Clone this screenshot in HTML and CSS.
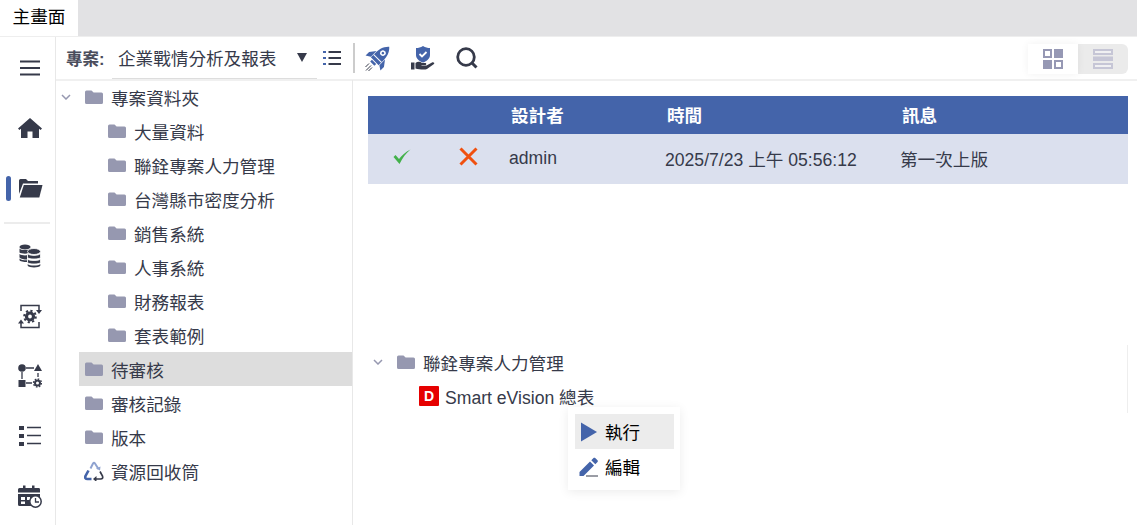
FILE: index.html
```html
<!DOCTYPE html>
<html lang="zh-Hant">
<head>
<meta charset="utf-8">
<title>主畫面</title>
<link rel="stylesheet" href="styles.css">
</head>
<body>
<svg class="defs" width="0" height="0" aria-hidden="true">
  <symbol id="folder" viewBox="0 0 18 15"><path d="M1.500 0.500H6.500L8.600 2.600H16.500A1.500 1.500 0 0 1 18 4.100V12.500A1.500 1.500 0 0 1 16.500 14H1.500A1.500 1.500 0 0 1 0 12.500V2A1.500 1.500 0 0 1 1.500 0.500Z" fill="#9698b0"/></symbol>
  <symbol id="chev" viewBox="0 0 10 6"><path d="M1 1L5 5L9 1" fill="none" stroke="#9698b0" stroke-width="1.500"/></symbol>
</svg>
<nav class="tabs"><div class="tab">主畫面</div></nav>
<div class="app">
  <aside class="rail">
    <div class="rail-btn"><svg width="20" height="16" viewBox="0 0 20 16"><path d="M0 1.500H20M0 8H20M0 14.500H20" stroke="#363a4a" stroke-width="2.200"/></svg></div>
    <div class="rail-btn"><svg width="24" height="20" viewBox="0 0 24 20"><path d="M12 0L24 10.500L22.600 12L21 10.700V20H14.500V13.500H9.500V20H3V10.700L1.400 12L0 10.500Z" fill="#363a4a"/></svg></div>
    <div class="rail-btn active"><span class="pill"></span><svg width="25" height="20" viewBox="0 0 25 20"><path d="M1 2.500A1.500 1.500 0 0 1 2.500 1H8L10 3H20V5.500H5L1 16Z" fill="#363a4a"/><path d="M5.800 7H24.500L21.300 19.500H1.800Z" fill="#363a4a"/></svg></div>
    <div class="rail-sep"></div>
    <div class="rail-btn"><svg width="22" height="24" viewBox="0 0 22 24"><g fill="#363a4a"><ellipse cx="6" cy="3" rx="5.500" ry="2.500"/><path d="M0.500 4.500C2 6.500 10 6.500 11.500 4.500V8.500C10 10 2 10 0.500 8.500Z"/><path d="M0.500 10C2 11.500 6 11.500 8 11.300V15.500C5 15.500 2 15 0.500 13.500Z"/><path d="M0.500 14.500C2 16 5 16.300 8 16.300V18C5 18 0.500 17.500 0.500 16Z"/></g><g fill="#363a4a" stroke="#fff" stroke-width="0.800"><ellipse cx="15" cy="7.500" rx="6.500" ry="3"/><path d="M8.500 9.500C10 12 20 12 21.500 9.500V13.500C20 15.500 10 15.500 8.500 13.500Z"/><path d="M8.500 15C10 17 20 17 21.500 15V18.500C20 20.500 10 20.500 8.500 18.500Z"/></g><path d="M8.700 20C10 22 20 22 21.300 20V21.800C20 24 10 24 8.700 21.800Z" fill="#363a4a"/></svg></div>
    <div class="rail-btn"><svg width="24" height="25" viewBox="0 0 24 25"><path d="M3 7V1.500H21V7M21 18V23.500H3V18" fill="none" stroke="#363a4a" stroke-width="1.500"/><path d="M0 19.500L3 15.500L6 19.500ZM18 6L21 10L24 6Z" fill="#363a4a"/><circle cx="12" cy="12.500" r="3.500" fill="none" stroke="#363a4a" stroke-width="3.200"/><circle cx="12" cy="12.500" r="5.800" fill="none" stroke="#363a4a" stroke-width="2" stroke-dasharray="2.200 2.300"/></svg></div>
    <div class="rail-btn"><svg width="24" height="24" viewBox="0 0 24 24"><circle cx="4" cy="4" r="3.800" fill="#363a4a"/><path d="M8 4H16M4 8V15M8 19H14M20 9V13" stroke="#363a4a" stroke-width="1.300"/><path d="M20 0L24 7H16Z" fill="#363a4a"/><rect x="0.500" y="16" width="7" height="7" fill="#363a4a"/><circle cx="19.500" cy="19" r="2.500" fill="none" stroke="#363a4a" stroke-width="2"/><circle cx="19.500" cy="19" r="4" fill="none" stroke="#363a4a" stroke-width="1.400" stroke-dasharray="1.600 1.500"/></svg></div>
    <div class="rail-btn"><svg width="22" height="22" viewBox="0 0 22 22"><g fill="#363a4a"><rect x="0" y="1" width="5" height="4"/><rect x="0" y="9" width="5" height="4"/><rect x="0" y="17" width="5" height="4"/></g><path d="M8 2.500H22M8 10.500H22M8 18.500H22" stroke="#363a4a" stroke-width="1.500"/></svg></div>
    <div class="rail-btn"><svg width="24" height="23" viewBox="0 0 24 23"><path d="M1.500 3H5V0.500H7.500V3H14V0.500H16.500V3H21A1.500 1.500 0 0 1 22 4.500V7.500H0V4.500A1.500 1.500 0 0 1 1.500 3Z" fill="#363a4a"/><path d="M0 9H22V13A7 7 0 0 0 13 21H1.500A1.500 1.500 0 0 1 0 19.500Z" fill="#363a4a"/><path d="M3 12H7V15H3ZM3 16.500H7V19H3ZM9 12H12V15H9Z" fill="#fff"/><circle cx="17.500" cy="16.500" r="5.700" fill="#fff" stroke="#363a4a" stroke-width="1.500"/><path d="M17.500 13V17H21" fill="none" stroke="#363a4a" stroke-width="1.300"/></svg></div>
  </aside>
  <div class="main">
    <header class="toolbar">
      <label class="proj-label">專案:</label>
      <div class="select"><span>企業戰情分析及報表</span><svg class="caret" width="10" height="9" viewBox="0 0 10 9"><path d="M0 0H10L5 9Z" fill="#363a4a"/></svg></div>
      <svg class="tool-list" width="18" height="14" viewBox="0 0 18 14"><path d="M0 1H3M0 7H3M0 13H3" stroke="#4464aa" stroke-width="2"/><path d="M5.500 1H18M5.500 7H18M5.500 13H18" stroke="#363a4a" stroke-width="2"/></svg>
      <span class="tool-sep"></span>
      <div class="tools">
        <svg width="25" height="25" viewBox="0 0 25 25"><g transform="rotate(45 14 11)"><path d="M14 -3.500C18.500 0.500 19.500 6 19.500 10V17H8.500V10C8.500 6 9.500 0.500 14 -3.500Z" fill="#4464aa"/><path d="M8 8.500L3.500 14.500V19.500L8 16.500ZM20 8.500L24.500 14.500V19.500L20 16.500Z" fill="#4464aa"/><circle cx="14" cy="5.500" r="2.800" fill="#fff"/><circle cx="14" cy="5.500" r="1.300" fill="#4464aa"/><rect x="8.500" y="12.500" width="11" height="1" fill="#fff"/><rect x="11" y="18" width="6" height="2.500" fill="#4464aa"/></g><path d="M1 24.500L6 19.500M3.500 25L7 21.500M0.500 21L4 17.500" stroke="#363a4a" stroke-width="1"/></svg>
        <svg width="24" height="24" viewBox="0 0 24 24"><path d="M12 0C9.500 1.500 7.500 2 5 2V9C5 12.500 8 15 12 16.500C16 15 19 12.500 19 9V2C16.500 2 14.500 1.500 12 0Z" fill="#4464aa"/><path d="M8.500 8L11 10.500L15.500 6" fill="none" stroke="#fff" stroke-width="1.800"/><path d="M0 16.500H3.500V23.500H0ZM4.500 17C7 15 9.500 16 11 17H14.500C15.500 17 15.500 19 14.500 19H10.500V19.500H15.500L21 16.500C22.500 16 24 17 23 18L16 23C14 24 8 23.500 4.500 22.500Z" fill="#363a4a"/></svg>
        <svg width="22" height="22" viewBox="0 0 22 22"><circle cx="10" cy="10" r="8.300" fill="none" stroke="#363a4a" stroke-width="2.800"/><path d="M15.500 15.500L20.500 20.500" stroke="#363a4a" stroke-width="3"/></svg>
      </div>
      <div class="view-switch">
        <button class="view-btn on" aria-label="grid"><svg width="20" height="20" viewBox="0 0 20 20"><path d="M0 0H9V9H0ZM11 11H20V20H11Z" fill="#9698b4"/><path d="M2 2H7V7H2ZM13 13H18V18H13Z" fill="#fff"/><path d="M11 0H20V9H11ZM0 11H9V20H0Z" fill="#9698b4"/></svg></button>
        <button class="view-btn" aria-label="list"><svg width="20" height="20" viewBox="0 0 20 20"><path d="M0 0H20V6H0ZM0 7.500H20V12H0ZM0 14H20V20H0Z" fill="#c6c6d6"/><path d="M2 2H18V4H2ZM2 16H18V18H2Z" fill="#f0f0f2"/></svg></button>
      </div>
    </header>
    <div class="panes">
      <section class="tree">
        <div class="node root"><svg class="chev" width="10" height="6"><use href="#chev"/></svg><svg class="fd" width="18" height="15"><use href="#folder"/></svg>專案資料夾</div>
        <div class="node sub"><svg class="fd" width="18" height="15"><use href="#folder"/></svg>大量資料</div>
        <div class="node sub"><svg class="fd" width="18" height="15"><use href="#folder"/></svg>聯銓專案人力管理</div>
        <div class="node sub"><svg class="fd" width="18" height="15"><use href="#folder"/></svg>台灣縣市密度分析</div>
        <div class="node sub"><svg class="fd" width="18" height="15"><use href="#folder"/></svg>銷售系統</div>
        <div class="node sub"><svg class="fd" width="18" height="15"><use href="#folder"/></svg>人事系統</div>
        <div class="node sub"><svg class="fd" width="18" height="15"><use href="#folder"/></svg>財務報表</div>
        <div class="node sub"><svg class="fd" width="18" height="15"><use href="#folder"/></svg>套表範例</div>
        <div class="node top selected"><svg class="fd" width="18" height="15"><use href="#folder"/></svg>待審核</div>
        <div class="node top"><svg class="fd" width="18" height="15"><use href="#folder"/></svg>審核記錄</div>
        <div class="node top"><svg class="fd" width="18" height="15"><use href="#folder"/></svg>版本</div>
        <div class="node top"><svg class="fd recycle" width="20" height="20" viewBox="0 0 20 20"><path d="M6.500 7.500L9 2.500Q10 1 11 2.500L14.500 8" fill="none" stroke="#8fa3d0" stroke-width="2"/><path d="M12 7.500L16 9.500L16.500 5.500Z" fill="#8fa3d0"/><path d="M4.500 9.500L1.500 15Q0.500 18 3.500 18H7.500" fill="none" stroke="#4464aa" stroke-width="2.600"/><path d="M16 10.500L18.500 15Q19.500 18 16.500 18H12" fill="none" stroke="#363a4a" stroke-width="1.700"/><path d="M12.500 15V21L9 18Z" fill="#363a4a"/></svg>資源回收筒</div>
      </section>
      <section class="content">
        <table class="grid">
          <thead><tr><th class="c1"></th><th class="c2"></th><th class="c3">設計者</th><th class="c4">時間</th><th>訊息</th></tr></thead>
          <tbody><tr>
            <td class="ic"><svg width="18" height="15" viewBox="0 0 18 15"><path d="M0.500 8L2.500 6L6 10C8.500 6.500 12.500 3 17.500 0.500C13 4 9.500 9 6.500 15Z" fill="#43b14b"/></svg></td>
            <td class="ic"><svg width="19" height="19" viewBox="0 0 19 19"><path d="M1.500 1.500L17.500 17.500M17.500 1.500L1.500 17.500" stroke="#f0500f" stroke-width="3"/></svg></td>
            <td>admin</td><td>2025/7/23 上午 05:56:12</td><td>第一次上版</td>
          </tr></tbody>
        </table>
        <div class="detail">
          <div class="node"><svg class="chev" width="10" height="6"><use href="#chev"/></svg><svg class="fd" width="18" height="15"><use href="#folder"/></svg>聯銓專案人力管理</div>
          <div class="node file"><span class="badge">D</span>Smart eVision 總表</div>
          <div class="menu">
            <div class="menu-item hover"><svg width="18" height="20" viewBox="0 0 18 20"><path d="M1 0.500L17 10L1 19.500Z" fill="#4464aa"/></svg>執行</div>
            <div class="menu-item"><svg width="20" height="20" viewBox="0 0 20 20"><path d="M0.500 15V19H4.500L15 8.500L11 4.500ZM12.300 3.200L16.300 7.200L18.500 5C19 4.500 19 3.800 18.500 3.300L16.200 1C15.700 0.500 15 0.500 14.500 1Z" fill="#4464aa"/><path d="M7 19H19" stroke="#363a4a" stroke-width="1"/></svg>編輯</div>
          </div>
        </div>
      </section>
    </div>
  </div>
</div>
</body>
</html>
```
FILE: styles.css
```css
* { box-sizing: border-box; }
html, body { margin: 0; height: 100%; overflow: hidden; }
body {
  background: #fff;
  color: #363a4a;
  font-family: "Liberation Sans", "Noto Sans CJK TC", sans-serif;
  font-size: 17.6px;
  display: flex;
  flex-direction: column;
}
.defs { position: absolute; }
.tabs { height: 37px; flex: none; background: #e2e2e4; border-bottom: 1px solid #eee; }
.tab {
  width: 78px; height: 36px; background: #fff; color: #000;
  text-align: center; line-height: 35px;
}
.app { flex: 1; display: flex; min-height: 0; }
.rail {
  width: 56px; flex: none; border-right: 1px solid #e8e8e8;
  display: flex; flex-direction: column; padding-top: 1px;
}
.rail-btn {
  height: 60px; flex: none; display: flex; align-items: center; justify-content: center;
  position: relative; padding-left: 5px;
}
.pill { position: absolute; left: 6px; top: 18px; width: 5px; height: 25px; border-radius: 3px; background: #4464aa; }
.rail-sep { height: 2px; margin: 4px 5px 2px 4px; background: #ececec; flex: none; }
.main { flex: 1; display: flex; flex-direction: column; min-width: 0; }
.toolbar {
  height: 44px; flex: none; display: flex; align-items: center;
  border-bottom: 2px solid #f0f0f0; padding-left: 10px; padding-right: 9px;
}
.proj-label { font-weight: 700; font-size: 16.500px; width: 46px; color: #4a4d5c; }
.select {
  width: 205px; height: 40px; margin-top: 2px; border-bottom: 1px solid #ddd;
  display: flex; align-items: center; padding-left: 6px; position: relative; padding-bottom: 2px;
}
.caret { position: absolute; left: 185px; top: 14px; }
.tool-list { margin-left: 6px; }
.tool-sep { width: 2px; height: 30px; background: #ccc; margin-left: 12px; }
.tools { display: flex; align-items: center; gap: 21px; margin-left: 10px; }
.view-switch { margin-left: auto; display: flex; height: 30px; border-radius: 6px; background: #ebebeb; margin-top: 1px; }
.view-btn { width: 50px; border: 0; padding: 0; background: transparent; display: flex; align-items: center; justify-content: center; }
.view-btn.on { background: #fff; box-shadow: 0 0 8px rgba(0,0,0,.06); }
.panes { flex: 1; display: flex; min-height: 0; }
.tree { width: 297px; flex: none; border-right: 1px solid #e8e8e8; padding-left: 23px; margin-top: -1px; }
.node { height: 34px; display: flex; align-items: center; position: relative; }
.chev { margin-right: 14px; flex: none; }
.fd { margin-right: 8px; flex: none; }
.root { margin-left: -23px; padding-left: 5px; }
.sub { margin-left: -23px; padding-left: 52px; }
.top { padding-left: 6px; }
.selected { background: #dddddd; }
.recycle { margin: 0 7px 0 -1px; }
.content { flex: 1; padding: 15px 9px 0 15px; min-width: 0; position: relative; }
.grid { width: 760px; border-collapse: collapse; table-layout: fixed; }
.grid th {
  background: #4464aa; color: #fff; height: 38px; text-align: left; padding: 0 0 2px 2px; font-weight: 700; font-size: 17.6px;
}
.c1 { width: 67px; } .c2 { width: 74px; } .c3 { width: 156px; } .c4 { width: 235px; }
.grid td { background: #dbe0ee; height: 50px; padding: 0 0 2px 0; }
.grid td.ic { padding: 0 0 5px 25px; }
.grid td.ic + td.ic { padding-left: 24px; }
.grid td svg { display: block; }
.detail { margin-top: 161px; padding-left: 5px; position: relative; height: 68px; }
.detail::after { content: ""; position: absolute; right: 0; top: 0; width: 1px; height: 68px; background: #eee; }
.file { padding-left: 46px; }
.badge {
  width: 20px; height: 20px; background: #e60000; color: #fff; border-radius: 1px; font-size: 14px; font-weight: 700;
  display: flex; align-items: center; justify-content: center; margin-right: 6px;
}
.menu {
  position: absolute; left: 200px; top: 62px; width: 112px; padding: 7px 6px 6px 7px; background: #fff;
  box-shadow: 0 2px 10px rgba(0,0,0,.08); color: #000; z-index: 2;
}
.menu-item { height: 35px; display: flex; align-items: center; padding-left: 5px; gap: 7px; }
.menu-item + .menu-item { padding-left: 4px; gap: 6px; }
.menu-item.hover { background: #ececec; }
```
